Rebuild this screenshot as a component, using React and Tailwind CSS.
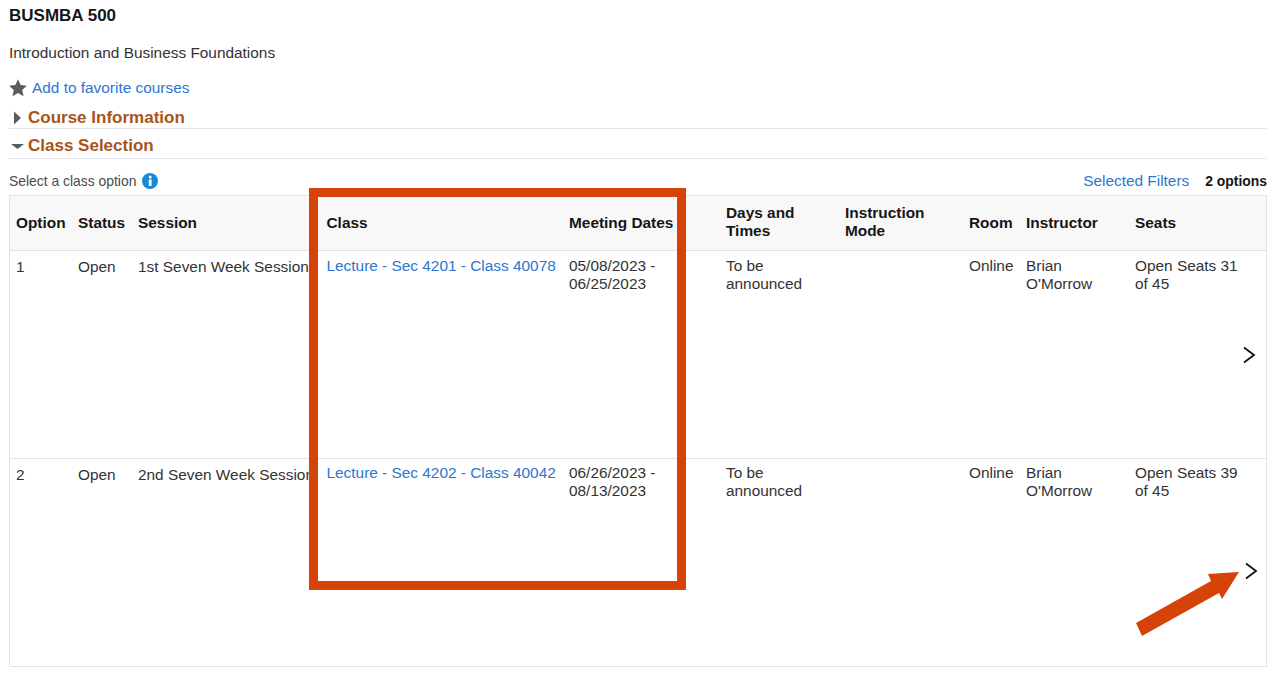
const cols = "grid grid-cols-[62px_60px_188.5px_242.5px_157px_119px_124px_57px_109px_1fr]";
const headCell = "pl-[6px] pr-[2px] text-[15.4px] leading-[18px] font-bold text-[#161616]";
const headCellTwo = `${headCell} -mt-[2px]`;
const base = "pl-[6px] pr-[2px] text-[15.4px] leading-[18px]";
const cell = `${base} text-[#333333]`;
const link = `${base} text-[#2b76d2] whitespace-nowrap`;

function Row({ n, session, cls, dates, seats, rowPad, sessionPad }) {
  return (
    <div className={`${cols} h-[208px] border-b border-[#dfe4ea] relative ${rowPad}`}>
      <div className={`${cell} ${sessionPad}`}>{n}</div>
      <div className={`${cell} ${sessionPad}`}>Open</div>
      <div className={`${cell} ${sessionPad} whitespace-nowrap`}>{session}</div>
      <div className={link}>{cls}</div>
      <div className={cell}>{dates[0]} -<br />{dates[1]}</div>
      <div className={cell}>To be<br />announced</div>
      <div className={cell}></div>
      <div className={cell}>Online</div>
      <div className={cell}>Brian<br />O'Morrow</div>
      <div className={cell}>Open Seats {seats}<br />of 45</div>
    </div>
  );
}

export default function App() {
  return (
    <div className="relative w-[1277px] h-[675px] overflow-hidden bg-white pl-[9px] pr-[10px] font-['Liberation_Sans',Arial,sans-serif] text-[#161616]">
      <div className="pt-[7px] h-[41px] text-[17px] leading-[18px] font-bold">BUSMBA 500</div>
      <div className="h-[24px] text-[15.4px] leading-[24px] text-[#333333]">Introduction and Business Foundations</div>
      <div className="flex items-center h-[22px] mt-[12px] gap-[5px]">
        <svg width="18" height="18" viewBox="0 0 18 18"><path d="M9 .2l2.600 5.900 6.300.6-4.700 4.200 1.400 6.300L9 13.900l-5.600 3.300 1.400-6.300L.1 6.700l6.300-.6z" fill="#5c5c5c" /></svg>
        <span className="text-[15.4px] text-[#2b76d2]">Add to favorite courses</span>
      </div>
      <div className="flex items-center h-[30px] border-b border-[#e4e4ec] gap-[5px] pl-[4px] pt-[9px]">
        <svg width="10" height="14" viewBox="0 0 10 14"><path d="M1 .5L8 7l-7 6.500z" fill="#5c5c5c" /></svg>
        <span className="text-[17px] font-bold text-[#a8541a]">Course Information</span>
      </div>
      <div className="flex items-center h-[30px] border-b border-[#e4e4ec] gap-[4px] pl-[2px] pt-[4px]">
        <svg width="13" height="10" viewBox="0 0 13 10"><path d="M0 3h13L6.500 8z" fill="#5c5c5c" /></svg>
        <span className="text-[17px] font-bold text-[#a8541a]">Class Selection</span>
      </div>
      <div className="flex items-center justify-between h-[36px] pt-[9px]">
        <div className="flex items-center gap-[6px]">
          <span className="text-[13.9px] text-[#4a4a4a]">Select a class option</span>
          <svg width="16" height="16" viewBox="0 0 16 16">
            <circle cx="8" cy="8" r="8" fill="#1a8ad8" />
            <circle cx="8.200" cy="4" r="1.500" fill="#fff" />
            <rect x="6.800" y="6.500" width="2.800" height="6.500" fill="#fff" />
          </svg>
        </div>
        <div className="flex items-center gap-[16px]">
          <span className="text-[15.4px] leading-[20px] text-[#2b76d2]">Selected Filters</span>
          <span className="text-[13.9px] font-bold text-[#161616]">2 options</span>
        </div>
      </div>
      <div className="border-x border-t border-[#dfe4ea] w-[1258px]">
        <div className={`${cols} h-[55px] items-center bg-[#f8f8f8] border-b border-[#dfe4ea]`}>
          <div className={headCell}>Option</div>
          <div className={headCell}>Status</div>
          <div className={headCell}>Session</div>
          <div className={headCell}>Class</div>
          <div className={`${headCell} whitespace-nowrap`}>Meeting Dates</div>
          <div className={headCellTwo}>Days and<br />Times</div>
          <div className={headCellTwo}>Instruction<br />Mode</div>
          <div className={headCell}>Room</div>
          <div className={headCell}>Instructor</div>
          <div className={headCell}>Seats</div>
        </div>
        <Row n="1" session="1st Seven Week Session" cls="Lecture - Sec 4201 - Class 40078" dates={["05/08/2023", "06/25/2023"]} seats="31" rowPad="pt-[6px]" sessionPad="pt-px" />
        <Row n="2" session="2nd Seven Week Session" cls="Lecture - Sec 4202 - Class 40042" dates={["06/26/2023", "08/13/2023"]} seats="39" rowPad="pt-[5px]" sessionPad="pt-[2px]" />
      </div>
      <svg className="absolute left-[1242px] top-[346px]" width="14" height="18" viewBox="0 0 14 18"><path d="M2 1.500L12 9 2 16.500" fill="none" stroke="#111" strokeWidth="1.800" /></svg>
      <svg className="absolute left-[1244px] top-[562px]" width="14" height="18" viewBox="0 0 14 18"><path d="M2 1.500L12 9 2 16.500" fill="none" stroke="#111" strokeWidth="1.800" /></svg>
      <div className="absolute left-[309px] top-[188px] w-[377px] h-[402px] border-[9px] border-[#d64309]"></div>
      <svg className="absolute left-[1130px] top-[565px]" width="115" height="75" viewBox="0 0 115 75">
        <path d="M109 7L78 9 81 16 6 58 12 71 89 28 92 34z" fill="#d64309" />
      </svg>
    </div>
  );
}
